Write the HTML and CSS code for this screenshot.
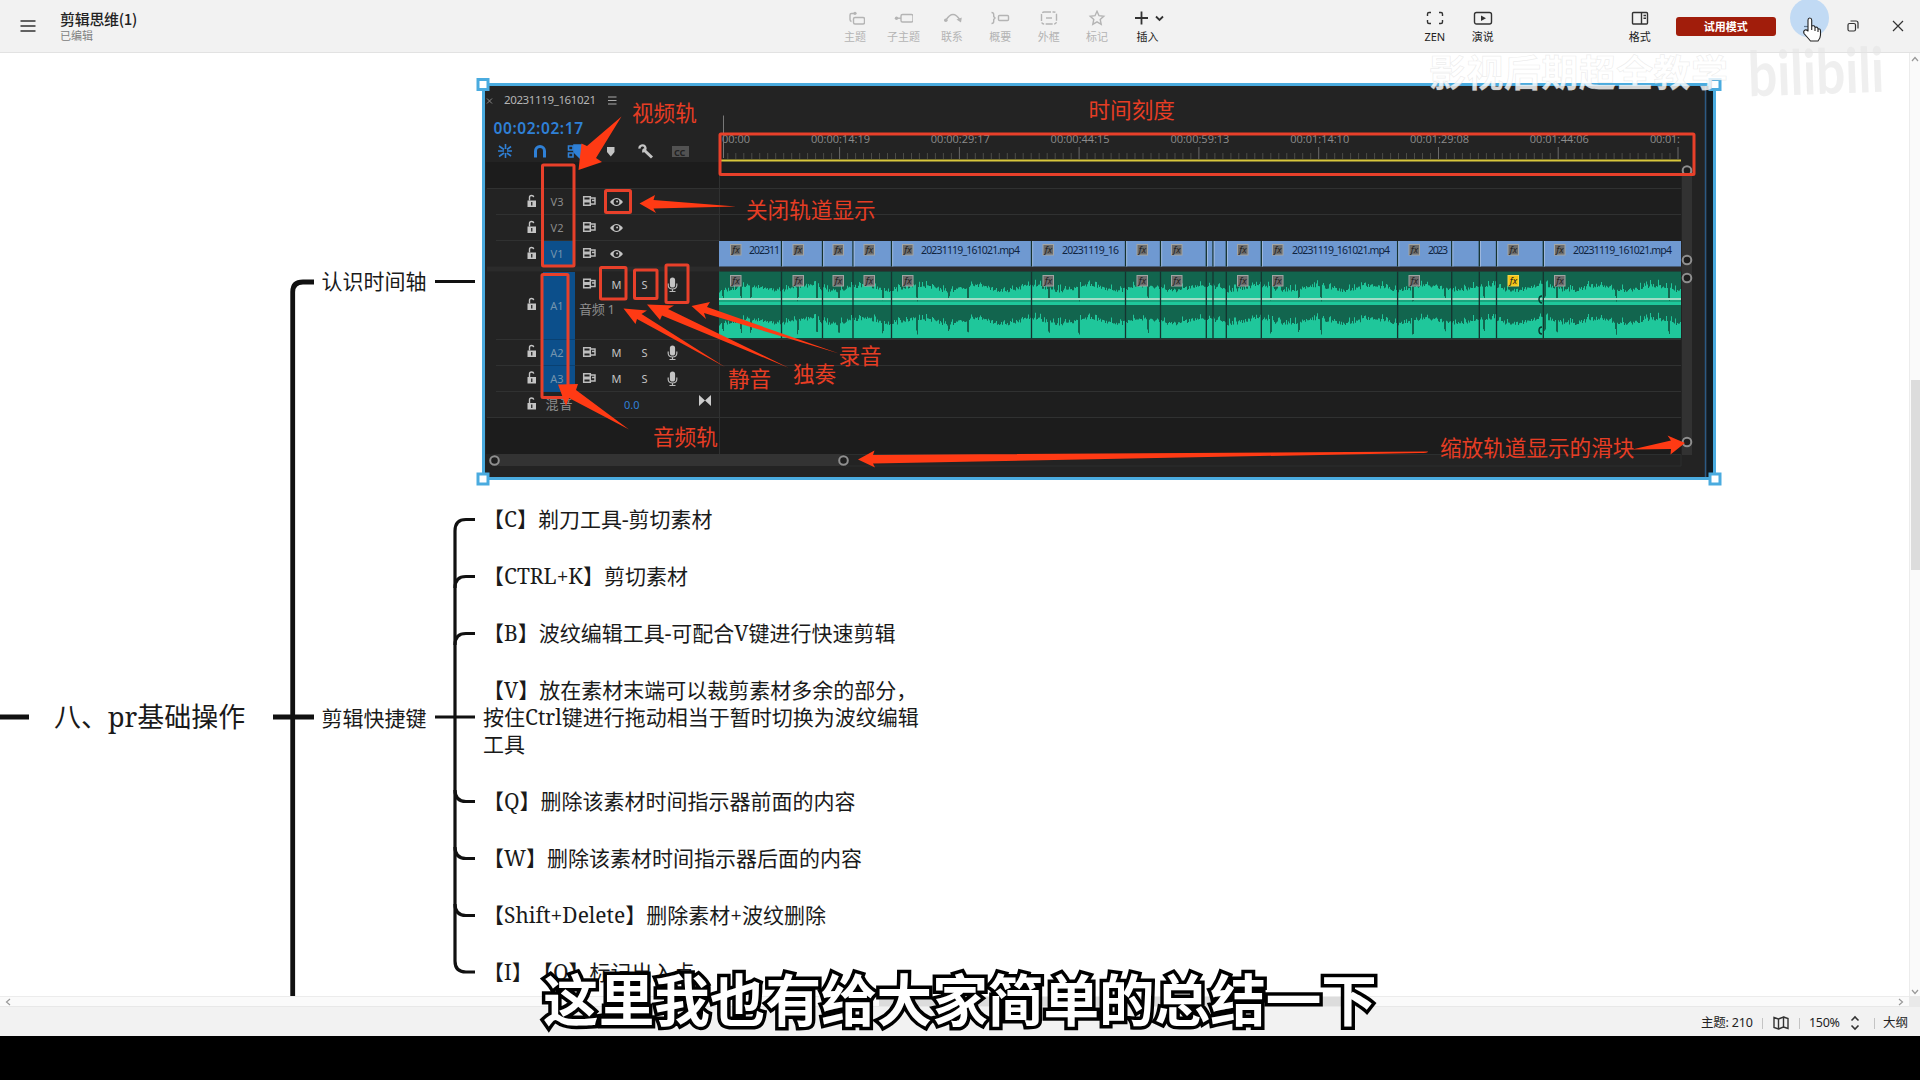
FILE: index.html
```
<!DOCTYPE html>
<html lang="zh-CN">
<head>
<meta charset="utf-8">
<title>剪辑思维(1)</title>
<link rel="stylesheet" href="styles.css">
</head>
<body>
<header class="topbar">
  <div class="doc">
    <svg class="menu" width="16" height="14" viewBox="0 0 16 14"><path d="M.5 2h15M.5 7h15M.5 12h15"/></svg>
    <div class="doc-name"><div class="title">剪辑思维(1)</div><div class="state">已编辑</div></div>
  </div>
  <nav class="tools">
    <div class="tool off"><svg width="20" height="16" viewBox="-2 0 20 16"><rect x="6.500" y="7.500" width="11" height="6.500" rx="1.500"/><path d="M4.500 11.500Q3 11 3 9.500V5Q3 3.500 4.500 3.500H8"/><circle class="dot" cx="8" cy="3.300" r="1.600"/></svg><span>主题</span></div>
    <div class="tool off"><svg width="20" height="16" viewBox="-1 0 20 16"><rect x="7" y="4.500" width="12" height="7.500" rx="1.500"/><path d="M2 8.200h5"/><circle class="dot" cx="2.500" cy="8.200" r="1.700"/></svg><span>子主题</span></div>
    <div class="tool off"><svg width="20" height="16" viewBox="-1 0 20 16"><path d="M3 10Q10-1 17 10"/><circle class="dot" cx="2.800" cy="10.300" r="1.800"/><path class="dot" d="M13.500 9.500 18.800 7.500 18 12.500z"/></svg><span>联系</span></div>
    <div class="tool off"><svg width="20" height="16" viewBox="0 0 20 16"><rect x="8.500" y="5.500" width="10" height="5" rx="1"/><path d="M1.500 2.500Q3.700 2.500 3.700 4.500V6.500L5 8 3.700 9.500V11.500Q3.700 13.500 1.500 13.500"/></svg><span>概要</span></div>
    <div class="tool off"><svg width="20" height="16" viewBox="0 0 20 16"><rect x="2.500" y="2" width="15" height="12" rx="2.500" stroke-dasharray="7 1.500 3 1.500"/><path d="M7 8h6"/></svg><span>外框</span></div>
    <div class="tool off"><svg width="20" height="16" viewBox="0 0 20 16"><path d="M10 1.300 12 5.700 16.800 6.200 13.200 9.500 14.200 14.300 10 11.900 5.800 14.300 6.800 9.500 3.200 6.200 8 5.700z"/></svg><span>标记</span></div>
    <div class="tool insert"><svg width="30" height="16" viewBox="0 0 30 16"><path d="M2 8h13M8.500 1.500v13M23 6.500l3.500 3.500 3.500-3.500"/></svg><span>插入</span></div>
  </nav>
  <nav class="modes">
    <div class="tool"><svg width="20" height="16" viewBox="0 0 20 16"><path d="M2.500 6V4Q2.500 2.500 4 2.500H6M14 2.500H16Q17.500 2.500 17.500 4V6M17.500 10V12Q17.500 13.500 16 13.500H14M6 13.500H4Q2.500 13.500 2.500 12V10"/></svg><span>ZEN</span></div>
    <div class="tool"><svg width="20" height="16" viewBox="0 0 20 16"><rect x="1.500" y="2.500" width="17" height="11.500" rx="2"/><path class="dot" d="M8 5.500V11L13 8.200z"/></svg><span>演说</span></div>
  </nav>
  <nav class="format">
    <div class="tool"><svg width="20" height="16" viewBox="0 0 20 16"><rect x="2.500" y="2.500" width="15" height="11.500" rx="1"/><path d="M11.500 2.500V14M13.500 5.500h2.500M13.500 8.200h2.500"/></svg><span>格式</span></div>
  </nav>
  <div class="trial">试用模式</div>
  <div class="window">
    <div class="win"><svg width="12" height="12" viewBox="0 0 12 12"><path d="M1 6.500h10"/></svg></div>
    <div class="win"><svg width="12" height="12" viewBox="0 0 12 12"><rect x="1" y="3.500" width="7.500" height="7.500" rx="1.500"/><path d="M3.500 1H9Q11 1 11 3V8.500"/></svg></div>
    <div class="win"><svg width="12" height="12" viewBox="0 0 12 12"><path d="M1 1 11 11M11 1 1 11"/></svg></div>
  </div>
</header>

<main class="work">
<svg class="canvas" width="1909" height="943" viewBox="0 53 1909 943">
  <defs>
    <g id="lock"><path d="M2-1.500V-4.500Q2-6.500 4-6.500T6.200-4.800" fill="none" stroke="#c4c4c4" stroke-width="1.400"/><path d="M0-1.500H8.500V5H0zM3.600 0V3.500H4.900V0z" fill="#c4c4c4" fill-rule="evenodd"/></g>
    <g id="sync" fill="none" stroke="#bdbdbd" stroke-width="1.500"><path d="M.7-4.300H7.300V-.8H.7zM.7.800H7.300V4.300H.7zM7-3H12V3H7M9-.5H12"/></g>
    <g id="eye"><path d="M-6.500 0Q0-8 6.500 0Q0 8-6.500 0z" fill="#c4c4c4"/><circle r="2.900" fill="#222"/><circle cx=".6" cy="-.6" r="1" fill="#c4c4c4"/></g>
    <g id="mic"><rect x="-2.600" y="-7" width="5.200" height="10" rx="2.600" fill="#c4c4c4"/><path d="M-4.300-1V1Q-4 4.500 0 4.500T4.300 1V-1M0 4.500V7M-3 7H3" fill="none" stroke="#bbb" stroke-width="1.200"/></g>
    <g id="knob"><circle r="4.300" fill="#1e1e1e" stroke="#8f8f8f" stroke-width="2"/></g>
    <g id="handle"><rect x="-5" y="-5" width="10" height="10" fill="#fff" stroke="#4aabdf" stroke-width="3"/></g>
  </defs>

  <g class="trunk">
    <path d="M0 717H29M273 717H314M292.700 997V292Q292.700 282 303 282H314"/>
  </g>
  <g class="branch">
    <path d="M435 281.500H475M435 717H475"/>
    <path d="M475 519.500H466Q455 519.500 455 531V961Q455 972 466 972H475"/>
    <path d="M455 588Q455 576.500 466 576.500H475M455 645Q455 633.500 466 633.500H475M455 790Q455 801.500 466 801.500H475M455 847Q455 858.500 466 858.500H475M455 904Q455 915.500 466 915.500H475"/>
  </g>
  <text class="node root" x="54" y="726.500">八、pr基础操作</text>
  <g class="node">
    <text x="321.500" y="289">认识时间轴</text>
    <text x="321.500" y="725.500">剪辑快捷键</text>
    <text x="483" y="526.500">【C】剃刀工具-剪切素材</text>
    <text x="483" y="583.500">【CTRL+K】剪切素材</text>
    <text x="483" y="640.500">【B】波纹编辑工具-可配合V键进行快速剪辑</text>
    <text x="483" y="697.500">【V】放在素材末端可以裁剪素材多余的部分，</text>
    <text x="483" y="724.500">按住Ctrl键进行拖动相当于暂时切换为波纹编辑</text>
    <text x="483" y="751.500">工具</text>
    <text x="483" y="808.500">【Q】删除该素材时间指示器前面的内容</text>
    <text x="483" y="865.500">【W】删除该素材时间指示器后面的内容</text>
    <text x="483" y="922.500">【Shift+Delete】删除素材+波纹删除</text>
    <text x="483" y="979.500">【I】<tspan x="532">【O】标记出入点</tspan></text>
  </g>

  <g class="timeline">
    <rect x="483" y="84" width="1232" height="395" fill="#232323"/>
    <rect x="1707" y="86" width="7" height="392" fill="#101b23"/>
    <path d="M1705.500 86V478" stroke="#2b5a85" stroke-width="1.500"/>
    <rect x="486" y="162" width="233" height="26" fill="#1c1c1c"/>
    <rect x="719" y="162" width="962" height="292" fill="#1e1e1e"/>
    <rect x="486" y="418" width="1195" height="36" fill="#1c1c1c"/>
    <rect x="487" y="266.500" width="1205" height="5" fill="#2b2b2b"/>
    <path d="M487 188.500H1681M496 214.500H1681M496 240.500H719M496 339.500H1681M496 365.500H1681M496 391.500H1681M487 417.500H1681M719.500 162V454" stroke="#303131" fill="none"/>
    <path d="M845 454.500H1681V466H845" stroke="#2c2f2f" fill="none"/>
    <rect x="492" y="454" width="353" height="12" rx="6" fill="#333"/>
    <rect x="1682" y="168" width="10" height="287" fill="#323232"/>
    <rect x="543" y="241" width="32" height="26" fill="#0c4f8b"/>
    <rect x="543" y="272" width="32" height="120" fill="#0c4f8b"/>
    <path d="M543 339.500H575M543 365.500H575" stroke="#0a4172"/>

    <path d="M487 98.500l5 5M492 98.500l-5 5" stroke="#8a8a8a"/>
    <text class="tab" x="504" y="104" textLength="92">20231119_161021</text>
    <path d="M608 97H616.500M608 100.500H616.500M608 104H616.500" stroke="#aaa" stroke-width="1.200"/>
    <text class="timecode" x="493.500" y="134" textLength="89.500">00:02:02:17</text>
    <g stroke="#2f80d6" fill="none" stroke-width="1.600">
      <path d="M498 151H504M507 151H512M499 146l5 3.500M499 156.500l5-3.500M505.500 144V149M505.500 153V158M507 149.500l4-3M507 153l4 3"/>
      <path d="M535.500 157.500V151A4.500 4.500 0 0 1 544.500 151V157.500" stroke-width="3"/>
      <path d="M568.500 146H573V150H568.500zM568.500 153H573V157H568.500z"/>
      <path d="M574 145H582V158H580L574 152z" fill="#2f80d6"/>
    </g>
    <path d="M607 147H614.500V152L610.800 156.500 607 152z" fill="#c4c4c4"/>
    <path d="M643 149L652 157.500" stroke="#c4c4c4" stroke-width="3"/><circle cx="642.500" cy="148.300" r="3" fill="none" stroke="#c4c4c4" stroke-width="2.300" stroke-dasharray="15 4" stroke-dashoffset="-10" transform="rotate(-20 642.500 148.300)"/>
    <rect x="672" y="146" width="17" height="11" fill="#525252"/><text class="cc" x="674" y="155.500">CC</text>

    <g id="ruler"></g>
    <path d="M723.500 115.500V158" stroke="#777"/>
    <path d="M721 160.500H1681" stroke="#d8c73c" stroke-width="2"/>

    <use href="#lock" x="527.500" y="202"/><use href="#lock" x="527.500" y="228"/><use href="#lock" x="527.500" y="254"/><use href="#lock" x="527.500" y="305"/><use href="#lock" x="527.500" y="352"/><use href="#lock" x="527.500" y="378.500"/><use href="#lock" x="527.500" y="404.500"/>
    <use href="#sync" x="583" y="201"/><use href="#sync" x="583" y="227"/><use href="#sync" x="583" y="253"/><use href="#sync" x="583" y="283.500"/><use href="#sync" x="583" y="352"/><use href="#sync" x="583" y="378"/>
    <use href="#eye" x="616.500" y="202"/><use href="#eye" x="616.500" y="228"/><use href="#eye" x="616.500" y="254"/>
    <use href="#mic" x="672.500" y="284.500"/><use href="#mic" x="672.500" y="352.500"/><use href="#mic" x="672.500" y="378.500"/>
    <g class="track">
      <text x="557" y="206">V3</text><text x="557" y="232">V2</text><text class="on" x="557" y="258">V1</text>
      <text class="on" x="557" y="310">A1</text><text class="on" x="557" y="357">A2</text><text class="on" x="557" y="383">A3</text>
    </g>
    <g class="ms">
      <text x="616.500" y="288.500">M</text><text x="644.500" y="288.500">S</text>
      <text x="616.500" y="357">M</text><text x="644.500" y="357">S</text>
      <text x="616.500" y="383">M</text><text x="644.500" y="383">S</text>
    </g>
    <text class="track-name" x="579" y="314" textLength="36">音频 1</text>
    <text class="track-name" x="545.500" y="408.500" textLength="27">混音</text>
    <text class="volume" x="624" y="408.500">0.0</text>
    <path d="M699 395V406L705 400.500zM711 395V406L705 400.500z" fill="#ccc"/>

    <g id="clips"></g>

    <use href="#knob" x="494.500" y="460.500"/><use href="#knob" x="843.500" y="460.500"/>
    <use href="#knob" x="1687" y="170.500"/><use href="#knob" x="1687" y="260"/><use href="#knob" x="1687" y="278"/><use href="#knob" x="1687" y="442"/>

    <g class="boxes">
      <rect x="720" y="134" width="974" height="40.500" rx="1"/>
      <rect x="542.500" y="165" width="31.500" height="101" rx="1"/>
      <rect x="605.500" y="190.500" width="25" height="22" rx="1"/>
      <rect x="600.500" y="267.500" width="25.500" height="31.500" rx="1"/>
      <rect x="634.500" y="270" width="22.500" height="28.500" rx="1"/>
      <rect x="666" y="265" width="22" height="37.500" rx="1"/>
      <rect x="542" y="274.500" width="26" height="123" rx="1"/>
    </g>
    <g class="arrows">
      <path d="M621.500 116.500 587 146 581.500 143.500 578.500 170 602 162 596 158z"/>
      <path d="M639.500 203.500 655 195 653.500 200 736 206.500 653.500 208.500 656 213z"/>
      <path d="M623.500 308.500 647 310.500 641.500 314 725 367 637 319 635.500 324z"/>
      <path d="M647 304.500 674 305.500 668 309 789 368 662 315.500 660 320z"/>
      <path d="M691.500 306 710 302 707 307 839 353.500 704 313 706 319z"/>
      <path d="M558 384.500 578 384 576 390 629 429.500 569 398 566 406z"/>
      <path d="M858 459.500 874.500 450.500 873 455 1428 451.500Q1428 453 1420 453L873 463.500 875 467.500z"/>
      <path d="M1632 449.500 1671 440.500 1667.500 435.500 1685 443 1670.500 454.500 1671 449z"/>
    </g>
    <g class="notes">
      <text x="632" y="121">视频轨</text>
      <text x="1088.500" y="118">时间刻度</text>
      <text x="746" y="217.500">关闭轨道显示</text>
      <text x="728" y="387">静音</text>
      <text x="793" y="382">独奏</text>
      <text x="838.500" y="363.500">录音</text>
      <text x="653" y="445">音频轨</text>
      <text x="1440" y="455.500">缩放轨道显示的滑块</text>
    </g>
    <rect class="selection" x="483.500" y="84.500" width="1231" height="394"/>
    <use href="#handle" x="483" y="84.500"/><use href="#handle" x="1715" y="84.500"/><use href="#handle" x="483" y="479"/><use href="#handle" x="1715" y="479"/>
  </g>
</svg>
<aside class="vscroll">
  <svg class="chev" width="10" height="8" viewBox="0 0 10 8"><path d="M2 6 5 2.500 8 6"/></svg>
  <div class="vthumb"></div>
  <svg class="chev" width="10" height="8" viewBox="0 0 10 8"><path d="M2 2 5 5.500 8 2"/></svg>
</aside>
</main>
<div class="hscroll">
  <svg class="chev" width="8" height="10" viewBox="0 0 8 10"><path d="M6 2 2.500 5 6 8"/></svg>
  <div class="hthumb"></div>
  <svg class="chev" width="8" height="10" viewBox="0 0 8 10"><path d="M2 2 5.500 5 2 8"/></svg>
  <i class="corner"></i>
</div>
<footer class="status">
  <span class="count">主题: 210</span><i></i>
  <svg width="16" height="14" viewBox="0 0 16 14"><path d="M1 1.500 5.500 3V13L1 11.500zM5.500 3 10.500 1V11L5.500 13M10.500 1 15 2.500V12.500L10.500 11"/></svg><i></i>
  <span class="percent">150%</span>
  <svg class="step" width="10" height="16" viewBox="0 0 10 16"><path d="M1.500 5.500 5 2 8.500 5.500M1.500 10.500 5 14 8.500 10.500"/></svg><i></i>
  <span class="outline">大纲</span>
</footer>
<div class="letterbox"></div>

<svg class="overlay" width="1920" height="1080" viewBox="0 0 1920 1080">
  <text class="author" x="1429" y="86.500" textLength="299">影视后期超全教学</text>
  <text class="logo" x="1748" y="94" textLength="136" lengthAdjust="spacingAndGlyphs" transform="rotate(-2 1816 72)">bilibili</text>
  <circle cx="1809.500" cy="18" r="19.500" fill="#8fc2f5" opacity=".5"/>
  <path class="hand" d="M1808 31V20Q1808 18 1809.800 18T1811.700 20V26Q1814.500 25 1815 27.300Q1817.500 26.500 1818 28.800Q1820.500 28.500 1820.500 31V35Q1820.500 38 1818 41H1810.500Q1808 38 1804 33.500Q1803 31 1805 30Q1806.500 29.500 1808 31zM1811.700 26V30M1815 27.500V31M1818 29V32"/>
</svg>
<div class="subtitle">这里我也有给大家简单的总结一下</div>
<script src="timeline.js"></script>
</body>
</html>
```
FILE: styles.css
```
* { box-sizing: border-box; }
body {
  margin: 0; width: 1920px; height: 1080px; overflow: hidden;
  display: flex; flex-direction: column; position: relative; background: #fff;
  font-family: "Noto Sans", "Noto Sans CJK SC", sans-serif; color: #222;
}
svg { display: block; flex: none; }

.topbar { height: 53px; flex: none; display: flex; background: #f2f2f2; border-bottom: 1px solid #e2e2e2; }
.doc { width: 831px; display: flex; padding: 9px 0 0 20px; }
.menu { margin-top: 10px; stroke: #333; stroke-width: 1.7; }
.doc-name { margin-left: 24px; }
.title { font: 15px/20px "Noto Sans CJK SC", sans-serif; font-weight: 500; letter-spacing: -.3px; color: #222; }
.state { font: 11px/13px "Noto Sans CJK SC", sans-serif; color: #808080; }
.tools, .modes, .format { display: flex; }
.tool {
  width: 48px; padding-top: 10px; display: flex; flex-direction: column; align-items: center;
  font: 11px/16px "Noto Sans", "Noto Sans CJK SC", sans-serif; color: #222;
}
.tools .tool { width: 48.4px; }
.tools .insert { width: 52.600px; }
.tool svg { fill: none; stroke: #333; stroke-width: 1.4; }
.tool .dot { fill: #333; stroke: none; }
.tool span { margin-top: 3px; white-space: nowrap; }
.tool.off { color: #b4b4b4; }
.tool.off svg { stroke: #b4b4b4; }
.tool.off .dot { fill: #b4b4b4; }
.insert svg { width: 30px; stroke-width: 1.8; overflow: visible; }
.modes { margin-left: 237px; }
.format { margin-left: 109px; }
.trial {
  width: 100px; height: 19px; margin: 17px 0 0 12px; border-radius: 3px; background: #a11d0b;
  color: #fff; font: bold 11px/19px "Noto Sans CJK SC", sans-serif; text-align: center;
}
.window { display: flex; margin-left: 11px; align-items: center; }
.win { width: 44.400px; display: flex; justify-content: center; }
.win svg { fill: none; stroke: #333; stroke-width: 1.2; }

.work { height: 943px; flex: none; display: flex; }
.vscroll {
  width: 11px; background: #fafafa; border-left: 1px solid #ececec;
  display: flex; flex-direction: column; align-items: center; padding: 2px 0 0;
}
.vthumb { width: 9px; height: 190px; margin: 317px 0 auto; background: #dcdcdc; }
.chev { fill: none; stroke: #999; stroke-width: 1.2; }
.hscroll { height: 11px; flex: none; display: flex; align-items: center; padding-left: 4px; background: #fafafa; border-top: 1px solid #ececec; border-bottom: 1px solid #e8e8e8; }
.hthumb { width: 462px; height: 9px; margin: 0 auto 0 867px; background: #dcdcdc; }
.corner { width: 11px; height: 11px; margin-left: 4px; background: #e9e9e9; }

.status {
  height: 29px; flex: none; display: flex; align-items: center; background: #f2f2f2; padding: 3px 0 0 1701px;
  font: 12.500px/20px "Noto Sans", "Noto Sans CJK SC", sans-serif; color: #222; white-space: nowrap;
}
.status i { width: 1px; height: 11px; background: #c4c4c4; flex: none; }
.status svg { fill: none; stroke: #333; stroke-width: 1.4; margin: 0 10px; }
.status svg.step { margin: 0 14px 0 10px; stroke-width: 1.6; }
.count { width: 61px; flex: none; letter-spacing: -.2px; }
.percent { margin-left: 9px; width: 31px; flex: none; letter-spacing: -.3px; }
.outline { margin-left: 8px; }
.letterbox { height: 44px; flex: none; background: #000; }

.trunk path { fill: none; stroke: #111; stroke-width: 4.800; }
.branch path { fill: none; stroke: #111; stroke-width: 3.200; }
.node { font: 21px "Noto Serif", "Liberation Serif", "Noto Sans CJK SC", serif; fill: #1a1a1a; }
.root { font-size: 27px; }

.timeline text { font-family: "Noto Sans", "Noto Sans CJK SC", sans-serif; }
.timeline .tab { font-size: 11.500px; fill: #b5b5b5; }
.timeline .timecode { font-size: 15.500px; font-weight: 600; fill: #2f80d6; }
.timeline .cc { font-size: 9px; font-weight: bold; fill: #222; }
.track text { font-size: 11px; fill: #8c8c8c; text-anchor: middle; }
.track .on { fill: #7394ae; }
.ms text { font-size: 11px; fill: #c4c4c4; text-anchor: middle; }
.timeline .track-name { font-size: 13px; fill: #8e8e8e; }
.timeline .volume { font-size: 11px; fill: #2f80d6; }
.timeline .mark { font-family: "Open Sans", sans-serif; font-size: 11px; fill: #8c8c8c; }
.timeline .clip-name { font-size: 10.500px; fill: #10243f; }
.timeline .fx { font-size: 9px; font-style: italic; fill: #222; }
.boxes rect { fill: none; stroke: #e8402a; stroke-width: 3; }
.arrows path { fill: #ff3a14; }
.notes text { font-size: 21.600px; fill: #e63d24; }
.selection { fill: none; stroke: #4aabdf; stroke-width: 3; }

.overlay { position: absolute; left: 0; top: 0; }
.author { font: bold 37px "Noto Sans CJK SC", sans-serif; fill: #fff; fill-opacity: .82; stroke: #ccc; stroke-opacity: .35; stroke-width: .7; }
.logo { font: bold 62px Lato, sans-serif; fill: #e4e4e4; fill-opacity: .6; }
.hand { fill: #fff; stroke: #222; stroke-width: 1.1; stroke-linejoin: round; }
.subtitle {
  position: absolute; left: 0; top: 957px; width: 1920px; text-align: center; white-space: nowrap;
  font: bold 55.600px/80px "Noto Sans CJK SC", sans-serif; color: #fff;
  -webkit-text-stroke: 7px #000; paint-order: stroke fill;
}
```
FILE: timeline.js
```
const NS = "http://www.w3.org/2000/svg";
function add(parent, name, attrs, text) {
  const el = document.createElementNS(NS, name);
  for (const key in attrs) el.setAttribute(key, attrs[key]);
  if (text) el.textContent = text;
  parent.appendChild(el);
  return el;
}

const ruler = document.getElementById("ruler");
let minor = "", major = "";
for (let i = 0; i <= 119; i++) {
  const x = (727.8 + i * 7.985).toFixed(1);
  if (x < 1680) {
    if (i % 15 === 14) major += `M${x} 147V159`;
    else minor += `M${x} 153V159`;
  }
}
add(ruler, "path", { d: minor, stroke: "#4b4b46" });
add(ruler, "path", { d: major, stroke: "#6a6a6a" });
add(ruler, "text", { class: "mark", x: 722, y: 143, textLength: 28 }, "00:00");
["00:00:14:19", "00:00:29:17", "00:00:44:15", "00:00:59:13", "00:01:14:10", "00:01:29:08", "00:01:44:06"]
  .forEach((t, i) => add(ruler, "text", { class: "mark", x: 811 + i * 119.8, y: 143, textLength: 59 }, t));
add(ruler, "text", { class: "mark", x: 1650, y: 143, textLength: 30 }, "00:01:");

const clips = document.getElementById("clips");
const full = "20231119_161021.mp4";
// start, fx badge x, name x, name, name width
const data = [
  [719, 730.5, 749, "202311", 31], [781.5, 793], [822.5, 833], [853, 864],
  [891.5, 902.5, 921, full, 99], [1031.5, 1043, 1062, "20231119_16", 57],
  [1125.5, 1137], [1160.5, 1171.5], [1206.3], [1213], [1226.3, 1237.5],
  [1261.3, 1272.5, 1292, full, 98], [1397.6, 1409, 1428, "2023", 20],
  [1451.7], [1479.3], [1496.5, 1508], [1543.3, 1554.5, 1573, full, 99]
];
const end = 1681;
add(clips, "rect", { x: 719, y: 241, width: end - 719, height: 25.5, fill: "#6f99d1" });
add(clips, "rect", { x: 719, y: 271.5, width: end - 719, height: 67, fill: "#12654e" });

let seed = 77;
const rand = () => (seed = (seed * 16807) % 2147483647) / 2147483647;
const levels = [];
let drop = 0;
for (let x = 719; x < end; x += 1) {
  let h = 15 + 2.5 * Math.sin(x / 9) + rand() * 4;
  if (rand() > .85) h += 4;
  if (rand() > .975) drop = 2;
  if (drop > 0) { h = 3 + rand() * 6; drop--; }
  levels.push(h);
}
[305, 338].forEach(base => {
  let d = `M719 ${base}`;
  levels.forEach((h, i) => {
    d += `V${(base - h).toFixed(1)}H${720 + i}`;
  });
  add(clips, "path", { d: d + `V${base}z`, fill: "#1fc79b" });
});
add(clips, "path", { d: "M719 299H1681", stroke: "#a0dcc6", "stroke-width": 1.8 });
add(clips, "path", { d: "M719 301H1681", stroke: "#16805f" });

data.forEach(([x, fx, nameX, name, width], i) => {
  if (i) {
    add(clips, "path", { d: `M${x} 241V266.500M${x} 271.500V338.500`, stroke: "#16332f", "stroke-width": 1.3 });
    add(clips, "path", { d: `M${x + 1.2} 241V266.500`, stroke: "#a9bfe0", "stroke-width": .8 });
  }
  if (fx) {
    [244.5, 275.5].forEach((y, row) => {
      const gold = row && i === 15;
      add(clips, "rect", { x: fx, y, width: 10.5, height: 10.5, fill: gold ? "#f3c313" : "#6c6c6c", stroke: gold ? "#f7d54a" : "#a3a5a3" });
      add(clips, "text", { class: "fx", x: fx + 1.8, y: y + 8 }, "fx");
    });
  }
  if (name) add(clips, "text", { class: "clip-name", x: nameX, y: 254, textLength: width }, name);
});
add(clips, "path", { d: "M1542 296a3 3.500 0 0 0 0 7M1542 327a3 3.500 0 0 0 0 7", fill: "none", stroke: "#083b2e", "stroke-width": 1.5 });
```
